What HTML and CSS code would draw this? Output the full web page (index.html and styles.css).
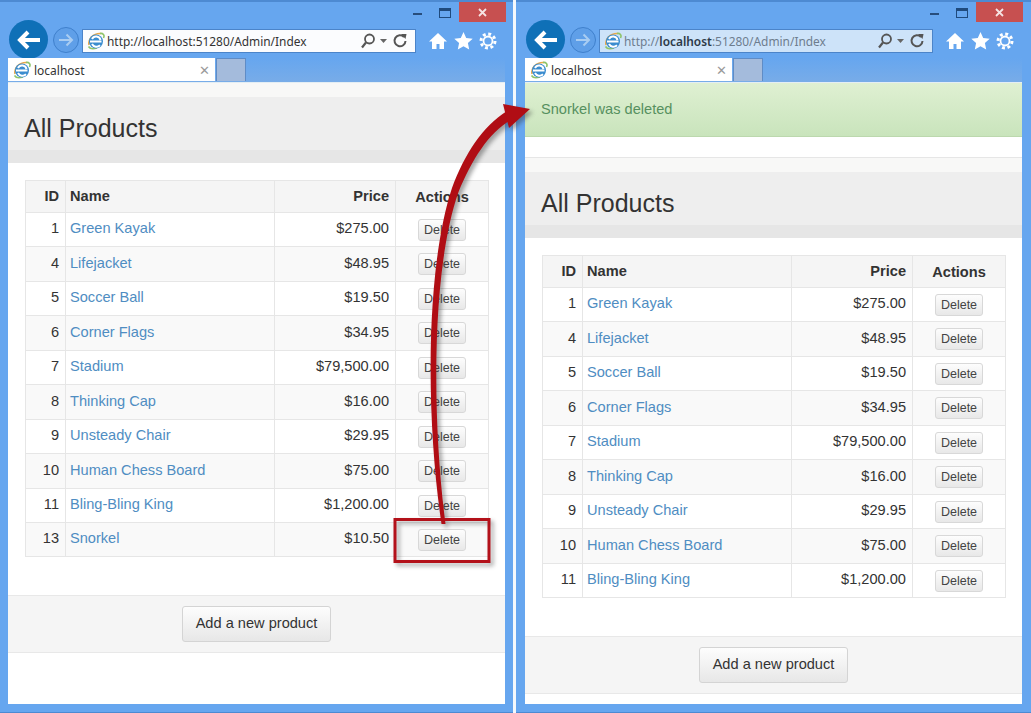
FILE: index.html
```html
<!DOCTYPE html>
<html lang="en">
<head>
    <meta charset="UTF-8">
    <title>All Products</title>
    <link rel="stylesheet" href="styles.css">
</head>
<body>
    <svg class="defs" width="0" height="0">
        <symbol id="ie" viewBox="0 0 18 18">
            <path d="M2 13C1 7 6 1 14 1.5" fill="none" stroke="#e9a84a" stroke-width="1.6"/>
            <path d="M1.5 14.5C3 17 7 17 10 16" fill="none" stroke="#8fc46a" stroke-width="1.6"/>
            <path d="M13 1.5C16 1 18 3 16.5 6" fill="none" stroke="#8fc46a" stroke-width="1.6"/>
            <circle cx="9" cy="9.5" r="7" fill="#3a8ccf"/>
            <path d="M3 9.5h11.5M5 7a4.6 4.6 0 0 1 8.5 1M5 12a5 5 0 0 0 8 1.2" fill="none" stroke="#fff" stroke-width="2"/>
        </symbol>
    </svg>

    <section class="window">
        <div class="titlebar">
            <span class="minimize"></span>
            <span class="maximize"></span>
            <span class="close"><svg width="11" height="11" viewBox="0 0 11 11"><path d="M2 2l7 7M9 2l-7 7" stroke="#f6e3e3" stroke-width="1.8"/></svg></span>
        </div>
        <div class="toolbar">
            <span class="back"><svg width="26" height="22" viewBox="0 0 26 22"><path d="M3 11h21M12 3l-8 8 8 8" fill="none" stroke="#fff" stroke-width="4"/></svg></span>
            <span class="forward"><svg width="16" height="14" viewBox="0 0 16 14"><path d="M1 7h13M8.500 1.500l5.500 5.500-5.500 5.500" fill="none" stroke="#a9cdf2" stroke-width="2"/></svg></span>
            <div class="address">
                <svg class="favicon" width="18" height="18"><use href="#ie"/></svg>
                <span class="url">http://localhost:51280/Admin/Index</span>
                <svg class="addr-tools" width="50" height="18" viewBox="0 0 50 18">
                    <circle cx="9.500" cy="7" r="4.500" fill="none" stroke="#555" stroke-width="1.800"/>
                    <path d="M6 10.500l-4 5" stroke="#555" stroke-width="2.200"/>
                    <path d="M20 7h7l-3.500 4z" fill="#666"/>
                    <path d="M44 5a5.500 5.500 0 1 0 1.500 4" fill="none" stroke="#555" stroke-width="2"/>
                    <path d="M41 2l5.500 0 -1 5z" fill="#555"/>
                </svg>
            </div>
            <svg class="tool tool-home" width="20" height="18" viewBox="0 0 20 18"><path d="M10 1L1 9.500h3V17h4.500v-5h3v5H16V9.500h3z" fill="#fff"/></svg>
            <svg class="tool" width="19" height="18" viewBox="0 0 19 18"><path d="M9.500 0l2.700 6 6.500.7-4.800 4.400 1.300 6.400-5.700-3.200-5.700 3.200 1.300-6.400L.3 6.700 6.800 6z" fill="#fff"/></svg>
            <svg class="tool" width="18" height="18" viewBox="0 0 18 18"><circle cx="9" cy="9" r="7" fill="none" stroke="#fff" stroke-width="3" stroke-dasharray="2.900 2.600"/><circle cx="9" cy="9" r="4.500" fill="none" stroke="#fff" stroke-width="1.800"/></svg>
        </div>
        <div class="tabs">
            <div class="tab">
                <svg class="favicon" width="18" height="18"><use href="#ie"/></svg>
                <span class="tab-label">localhost</span>
                <span class="tab-close">&#10005;</span>
            </div>
            <div class="new-tab"></div>
        </div>
        <main class="content">
            <header class="page-title"><h1>All Products</h1></header>
            <table class="products">
                <thead>
                    <tr><th class="col-id">ID</th><th class="col-name">Name</th><th class="col-price">Price</th><th class="col-actions">Actions</th></tr>
                </thead>
                <tbody>
                    <tr><td class="col-id">1</td><td class="col-name"><a href="#">Green Kayak</a></td><td class="col-price">$275.00</td><td class="col-actions"><button class="btn-delete">Delete</button></td></tr>
                    <tr><td class="col-id">4</td><td class="col-name"><a href="#">Lifejacket</a></td><td class="col-price">$48.95</td><td class="col-actions"><button class="btn-delete">Delete</button></td></tr>
                    <tr><td class="col-id">5</td><td class="col-name"><a href="#">Soccer Ball</a></td><td class="col-price">$19.50</td><td class="col-actions"><button class="btn-delete">Delete</button></td></tr>
                    <tr><td class="col-id">6</td><td class="col-name"><a href="#">Corner Flags</a></td><td class="col-price">$34.95</td><td class="col-actions"><button class="btn-delete">Delete</button></td></tr>
                    <tr><td class="col-id">7</td><td class="col-name"><a href="#">Stadium</a></td><td class="col-price">$79,500.00</td><td class="col-actions"><button class="btn-delete">Delete</button></td></tr>
                    <tr><td class="col-id">8</td><td class="col-name"><a href="#">Thinking Cap</a></td><td class="col-price">$16.00</td><td class="col-actions"><button class="btn-delete">Delete</button></td></tr>
                    <tr><td class="col-id">9</td><td class="col-name"><a href="#">Unsteady Chair</a></td><td class="col-price">$29.95</td><td class="col-actions"><button class="btn-delete">Delete</button></td></tr>
                    <tr><td class="col-id">10</td><td class="col-name"><a href="#">Human Chess Board</a></td><td class="col-price">$75.00</td><td class="col-actions"><button class="btn-delete">Delete</button></td></tr>
                    <tr><td class="col-id">11</td><td class="col-name"><a href="#">Bling-Bling King</a></td><td class="col-price">$1,200.00</td><td class="col-actions"><button class="btn-delete">Delete</button></td></tr>
                    <tr class="row-last"><td class="col-id">13</td><td class="col-name"><a href="#">Snorkel</a></td><td class="col-price">$10.50</td><td class="col-actions"><button class="btn-delete">Delete</button></td></tr>
                </tbody>
            </table>
            <footer class="page-footer"><button class="btn-add">Add a new product</button></footer>
        </main>
    </section>

    <section class="window window-right">
        <div class="titlebar">
            <span class="minimize"></span>
            <span class="maximize"></span>
            <span class="close"><svg width="11" height="11" viewBox="0 0 11 11"><path d="M2 2l7 7M9 2l-7 7" stroke="#f6e3e3" stroke-width="1.8"/></svg></span>
        </div>
        <div class="toolbar">
            <span class="back"><svg width="26" height="22" viewBox="0 0 26 22"><path d="M3 11h21M12 3l-8 8 8 8" fill="none" stroke="#fff" stroke-width="4"/></svg></span>
            <span class="forward"><svg width="16" height="14" viewBox="0 0 16 14"><path d="M1 7h13M8.500 1.500l5.500 5.500-5.500 5.500" fill="none" stroke="#a9cdf2" stroke-width="2"/></svg></span>
            <div class="address address-idle">
                <svg class="favicon" width="18" height="18"><use href="#ie"/></svg>
                <span class="url">http://<b>localhost</b>:51280/Admin/Index</span>
                <svg class="addr-tools" width="50" height="18" viewBox="0 0 50 18">
                    <circle cx="9.500" cy="7" r="4.500" fill="none" stroke="#555" stroke-width="1.800"/>
                    <path d="M6 10.500l-4 5" stroke="#555" stroke-width="2.200"/>
                    <path d="M20 7h7l-3.500 4z" fill="#666"/>
                    <path d="M44 5a5.500 5.500 0 1 0 1.500 4" fill="none" stroke="#555" stroke-width="2"/>
                    <path d="M41 2l5.500 0 -1 5z" fill="#555"/>
                </svg>
            </div>
            <svg class="tool tool-home" width="20" height="18" viewBox="0 0 20 18"><path d="M10 1L1 9.500h3V17h4.500v-5h3v5H16V9.500h3z" fill="#fff"/></svg>
            <svg class="tool" width="19" height="18" viewBox="0 0 19 18"><path d="M9.500 0l2.700 6 6.500.7-4.800 4.400 1.300 6.400-5.700-3.200-5.700 3.200 1.300-6.400L.3 6.700 6.800 6z" fill="#fff"/></svg>
            <svg class="tool" width="18" height="18" viewBox="0 0 18 18"><circle cx="9" cy="9" r="7" fill="none" stroke="#fff" stroke-width="3" stroke-dasharray="2.900 2.600"/><circle cx="9" cy="9" r="4.500" fill="none" stroke="#fff" stroke-width="1.800"/></svg>
        </div>
        <div class="tabs">
            <div class="tab">
                <svg class="favicon" width="18" height="18"><use href="#ie"/></svg>
                <span class="tab-label">localhost</span>
                <span class="tab-close">&#10005;</span>
            </div>
            <div class="new-tab"></div>
        </div>
        <main class="content">
            <div class="alert-success">Snorkel was deleted</div>
            <header class="page-title page-title-ruled"><h1>All Products</h1></header>
            <table class="products">
                <thead>
                    <tr><th class="col-id">ID</th><th class="col-name">Name</th><th class="col-price">Price</th><th class="col-actions">Actions</th></tr>
                </thead>
                <tbody>
                    <tr><td class="col-id">1</td><td class="col-name"><a href="#">Green Kayak</a></td><td class="col-price">$275.00</td><td class="col-actions"><button class="btn-delete">Delete</button></td></tr>
                    <tr><td class="col-id">4</td><td class="col-name"><a href="#">Lifejacket</a></td><td class="col-price">$48.95</td><td class="col-actions"><button class="btn-delete">Delete</button></td></tr>
                    <tr><td class="col-id">5</td><td class="col-name"><a href="#">Soccer Ball</a></td><td class="col-price">$19.50</td><td class="col-actions"><button class="btn-delete">Delete</button></td></tr>
                    <tr><td class="col-id">6</td><td class="col-name"><a href="#">Corner Flags</a></td><td class="col-price">$34.95</td><td class="col-actions"><button class="btn-delete">Delete</button></td></tr>
                    <tr><td class="col-id">7</td><td class="col-name"><a href="#">Stadium</a></td><td class="col-price">$79,500.00</td><td class="col-actions"><button class="btn-delete">Delete</button></td></tr>
                    <tr><td class="col-id">8</td><td class="col-name"><a href="#">Thinking Cap</a></td><td class="col-price">$16.00</td><td class="col-actions"><button class="btn-delete">Delete</button></td></tr>
                    <tr><td class="col-id">9</td><td class="col-name"><a href="#">Unsteady Chair</a></td><td class="col-price">$29.95</td><td class="col-actions"><button class="btn-delete">Delete</button></td></tr>
                    <tr><td class="col-id">10</td><td class="col-name"><a href="#">Human Chess Board</a></td><td class="col-price">$75.00</td><td class="col-actions"><button class="btn-delete">Delete</button></td></tr>
                    <tr><td class="col-id">11</td><td class="col-name"><a href="#">Bling-Bling King</a></td><td class="col-price">$1,200.00</td><td class="col-actions"><button class="btn-delete">Delete</button></td></tr>
                </tbody>
            </table>
            <footer class="page-footer"><button class="btn-add">Add a new product</button></footer>
        </main>
    </section>

    <!-- callout drawn over both windows -->
    <svg class="callout" width="1031" height="713" viewBox="0 0 1031 713">
        <rect x="395" y="519.500" width="94" height="42" fill="none" stroke="#b3111a" stroke-width="3"/>
        <path d="M441.500 524C426 420 425 270 452 188C465 153 483 126 507 111L511 120C488 133 472 160 458.500 192C431 270 432 420 445.500 524Z" fill="#b00d14"/>
        <path d="M503 104L530 109L509 128Z" fill="#b00d14"/>
    </svg>
</body>
</html>
```

FILE: styles.css
```css
* {
    box-sizing: border-box;
}

html, body {
    height: 100%;
}

body {
    margin: 0;
    display: flex;
    gap: 3px;
    width: 1031px;
    height: 713px;
    overflow: hidden;
    background: #f4f8fc;
    font-family: "Liberation Sans", Arial, sans-serif;
    font-size: 14.6px;
    color: #333;
}

.defs {
    position: absolute;
}

.window {
    width: 513px;
    height: 713px;
    display: flex;
    flex-direction: column;
    padding: 0 8px 8px;
    background: #66a6ef;
    border-top: 2px solid #4d8ad2;
    border-bottom: 1px solid #4d8ad2;
}

.window-right {
    width: 515px;
    padding: 0 9px 8px;
}

.titlebar {
    height: 20px;
    flex: none;
    display: flex;
    justify-content: flex-end;
}

.minimize {
    width: 9px;
    height: 2px;
    margin: 11px 17px 0 0;
    background: #274d7c;
}

.maximize {
    width: 12px;
    height: 10px;
    margin: 6px 8px 0 0;
    border: 1px solid #1f4a7d;
    border-top-width: 3px;
}

.close {
    width: 47px;
    height: 20px;
    margin-right: -1px;
    display: flex;
    align-items: center;
    justify-content: center;
    background: #c75050;
}

.toolbar {
    height: 36px;
    flex: none;
    display: flex;
    align-items: center;
}

.back {
    width: 39px;
    height: 39px;
    margin: -1px 5px 0 1px;
    flex: none;
    display: flex;
    align-items: center;
    justify-content: center;
    border-radius: 50%;
    background: #0f70b7;
}

.forward {
    width: 26px;
    height: 26px;
    margin-right: 3px;
    flex: none;
    display: flex;
    align-items: center;
    justify-content: center;
    border: 1px solid #3f80cc;
    border-radius: 50%;
    background: #5f9fe8;
}

.address {
    width: 334px;
    height: 24px;
    margin-top: 2px;
    flex: none;
    display: flex;
    align-items: center;
    padding: 0 5px 0 4px;
    background: #fbfcfe;
    border: 1px solid #4b84c9;
    font-family: "Noto Sans", sans-serif;
    font-size: 11.9px;
    color: #333;
}

.address-idle {
    background: #cde3f9;
}

.address-idle .url {
    color: #6d7d8e;
}

.address-idle .url b {
    font-weight: 600;
    color: #2c3a48;
}

.url {
    margin-left: 2px;
    flex: 1;
    white-space: nowrap;
}

.favicon {
    flex: none;
}

.addr-tools {
    flex: none;
}

.tool {
    margin: 2px 0 0 6px;
    flex: none;
}

.tool-home {
    margin-left: 12px;
}

.tabs {
    height: 24px;
    flex: none;
    display: flex;
    align-items: flex-start;
    gap: 1px;
    background: linear-gradient(#66a6ef, #78ace8);
}

.tab {
    width: 207px;
    height: 23px;
    display: flex;
    align-items: center;
    padding: 1px 5px 0 5px;
    background: #fff;
    font-family: "Noto Sans", sans-serif;
    font-size: 12px;
    color: #333;
}

.tab-label {
    margin-left: 3px;
    flex: 1;
}

.tab-close {
    font-size: 13px;
    color: #9a9a9a;
}

.new-tab {
    width: 30px;
    height: 23px;
    background: #a4bbdc;
    border: 1px solid #5f8cc6;
    border-bottom: 0;
}

.content {
    flex: 1;
    background: #fff;
    border-top: 1px solid #e4eef4;
}

.alert-success {
    height: 54px;
    display: flex;
    align-items: center;
    padding: 0 16px 2px;
    background: linear-gradient(#dff0d2, #c9e4bc);
    border-bottom: 1px solid #bcd8ae;
    color: #56905f;
}

.page-title {
    padding-top: 14px;
    background: #f8f8f7;
}

.page-title h1 {
    margin: 0;
    height: 66px;
    padding: 9px 16px 0;
    display: flex;
    align-items: center;
    background: #eee;
    border-bottom: 13px solid #e6e6e6;
    font-size: 25px;
    font-weight: 400;
    color: #333;
}

.page-title-ruled {
    margin-top: 20px;
    border-top: 1px solid #e6e6e6;
}

.products {
    width: 463px;
    margin: 17px 17px 38px;
    table-layout: fixed;
    border-collapse: collapse;
}

.products th, .products td {
    padding: 0 6px 3px 4px;
    border: 1px solid #e6e6e6;
}

.products th {
    height: 32px;
    padding-bottom: 1px;
    background: #f5f5f5;
    font-weight: 700;
    color: #333;
}

.products .col-actions {
    padding: 0 4px;
}

.products tbody tr:nth-child(even) {
    background: #f9f9f9;
}

.products tbody tr:nth-child(even) td {
    height: 35px;
}

.products tbody tr:nth-child(odd) td {
    height: 34px;
}

.products tbody tr.row-last td {
    height: 34px;
}

.col-id {
    width: 40px;
    text-align: right;
}

.col-name {
    width: 209px;
    text-align: left;
}

.col-price {
    width: 121px;
    text-align: right;
}

.col-actions {
    width: 93px;
    text-align: center;
}

.products a {
    color: #4f8dc2;
    text-decoration: none;
}

.btn-delete {
    width: 48px;
    height: 22px;
    padding: 0;
    background: linear-gradient(#fdfdfd, #e8e8e8);
    border: 1px solid #d8d8d8;
    border-radius: 3px;
    font-family: inherit;
    font-size: 12.500px;
    color: #444;
}

.page-footer {
    height: 58px;
    display: flex;
    align-items: center;
    justify-content: center;
    background: #f5f5f5;
    border-top: 1px solid #e8e8e8;
    border-bottom: 1px solid #e8e8e8;
}

.btn-add {
    width: 149px;
    height: 36px;
    padding: 0 0 2px;
    background: linear-gradient(#fdfdfd, #e7e7e7);
    border: 1px solid #d4d4d4;
    border-radius: 3px;
    font-family: inherit;
    font-size: 14.600px;
    color: #333;
}

.callout {
    position: absolute;
    left: 0;
    top: 0;
    filter: drop-shadow(3px 3px 2px rgba(60, 60, 60, 0.45));
}
```
